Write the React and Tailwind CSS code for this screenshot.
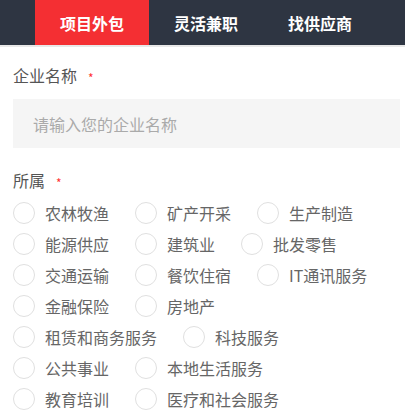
const tabs = ['项目外包', '灵活兼职', '找供应商'];

const rows = [
  ['农林牧渔', '矿产开采', '生产制造'],
  ['能源供应', '建筑业', '批发零售'],
  ['交通运输', '餐饮住宿', 'IT通讯服务'],
  ['金融保险', '房地产'],
  ['租赁和商务服务', '科技服务'],
  ['公共事业', '本地生活服务'],
  ['教育培训', '医疗和社会服务'],
];

const Label = ({ children }) => (
  <div className="flex items-center h-6 text-[16px] text-[#555]">
    {children}
    <span className="ml-[11px] mt-[5px] text-[12px] text-[#f33] leading-none">*</span>
  </div>
);

const Radio = ({ label }) => (
  <label className="flex items-center mr-[26px]">
    <span className="w-[22px] h-[22px] rounded-full border border-[#e0e0e0] bg-white flex-shrink-0" />
    <span className="ml-[10px] text-[16px] text-[#666] whitespace-nowrap">{label}</span>
  </label>
);

export default function App() {
  return (
    <div className="w-[405px] h-[410px] overflow-hidden bg-white" style={{ fontFamily: '"Noto Sans CJK SC", "Noto Sans", sans-serif' }}>
      <div className="h-[45px] bg-[#2e3542] flex pl-[35px]">
        {tabs.map((t, i) => (
          <div
            key={t}
            className={`w-[114px] flex items-center justify-center text-[16px] font-bold text-white ${i === 0 ? 'bg-[#f42f33]' : ''}`}
          >
            {t}
          </div>
        ))}
      </div>
      <div className="h-[2px] bg-[#e8e8e8]" />

      <div className="px-[13px] pt-[16px]">
        <Label>企业名称</Label>
        <div className="mt-[12px] h-[49px] w-[387px] bg-[#f5f5f5] flex items-center pl-[20px] text-[16px] text-[#aaa]">
          请输入您的企业名称
        </div>

        <div className="mt-[20px]">
          <Label>所属</Label>
        </div>

        <div className="mt-[5px]">
          {rows.map((row, i) => (
            <div key={i} className="flex items-center h-[31px]">
              {row.map((item) => (
                <Radio key={item} label={item} />
              ))}
            </div>
          ))}
        </div>
      </div>
    </div>
  );
}
